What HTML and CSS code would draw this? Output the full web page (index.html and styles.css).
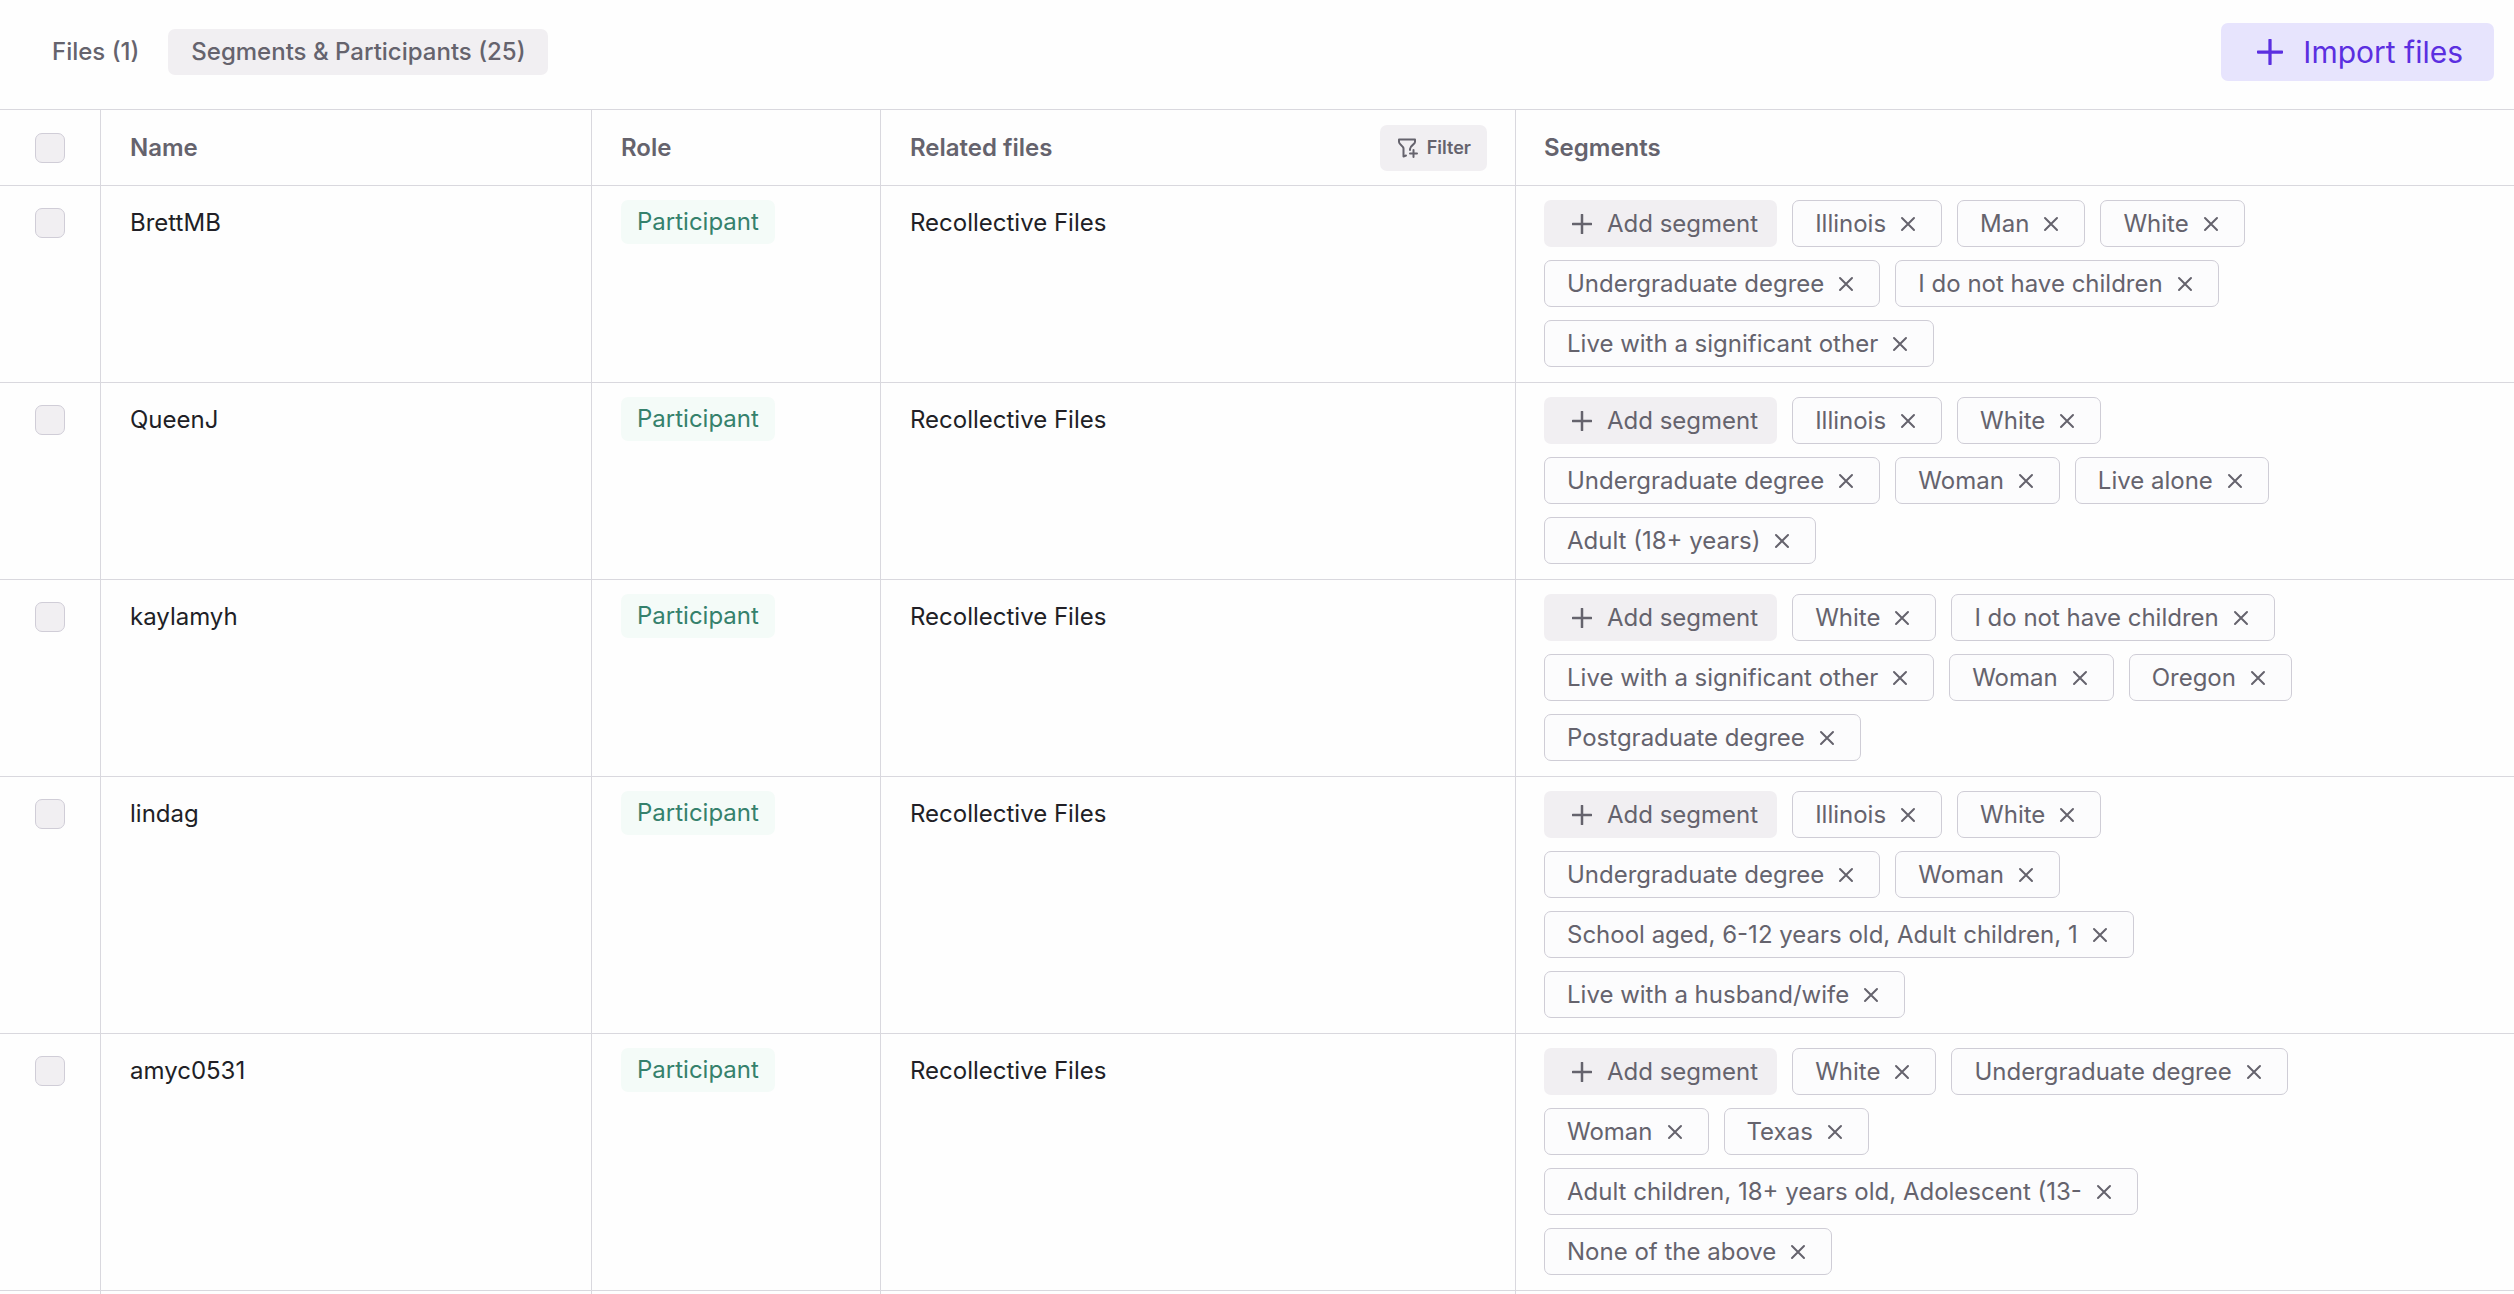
FILE: index.html
```html
<!DOCTYPE html>
<html lang="en">
<head>
    <meta charset="UTF-8">
    <meta name="viewport" content="width=device-width, initial-scale=1.0">
    <title>Segments &amp; Participants</title>
    <link rel="stylesheet" href="styles.css">
</head>
<body>
    <!-- shared icons -->
    <svg class="sprite" aria-hidden="true">
        <symbol id="plus" viewBox="0 0 24 24"><path d="M12 1v22M1 12h22"/></symbol>
        <symbol id="close" viewBox="0 0 18 18"><path d="M3 3l12 12M15 3L3 15"/></symbol>
        <symbol id="funnel" viewBox="0 0 20 20"><path d="M8 17.500L5.500 18.500V10.500C5.500 8 1 6.500 1 4V1.500h16V4c0 2.500-5 3.500-5 7v1M15.500 12v7M12 15.500h7"/></symbol>
    </svg>

    <header class="toolbar">
        <nav class="tabs">
            <button class="tab">Files (1)</button>
            <button class="tab active">Segments &amp; Participants (25)</button>
        </nav>
        <button class="import-btn"><svg class="icon-lg"><use href="#plus"/></svg>Import files</button>
    </header>

    <table class="people">
        <colgroup>
            <col class="col-check">
            <col class="col-name">
            <col class="col-role">
            <col class="col-files">
            <col>
        </colgroup>
        <thead>
            <tr>
                <th><input type="checkbox" aria-label="Select all"></th>
                <th>Name</th>
                <th>Role</th>
                <th>
                    <div class="th-row">Related files
                        <button class="filter-btn"><svg class="icon-filter"><use href="#funnel"/></svg>Filter</button>
                    </div>
                </th>
                <th>Segments</th>
            </tr>
        </thead>
        <tbody id="rows"></tbody>
        <tfoot>
            <tr><td></td><td></td><td></td><td></td><td></td></tr>
        </tfoot>
    </table>
    <script src="script.js"></script>
</body>
</html>
```

FILE: styles.css
```css
* {
    box-sizing: border-box;
}
body {
    margin: 0;
    font-family: Inter, "Open Sans", sans-serif;
    font-size: 24px;
    line-height: 30px;
    color: #211f26;
    background: #fefefe;
    overflow: hidden;
}
button {
    font: inherit;
    color: #65636d;
    border: none;
    border-radius: 7px;
    background: none;
    cursor: pointer;
}
svg {
    fill: none;
    stroke: currentColor;
    stroke-linecap: round;
    stroke-linejoin: round;
    flex: none;
}
.sprite {
    display: none;
}

/* top bar */
.toolbar {
    display: flex;
    justify-content: space-between;
    align-items: center;
    padding: 23px 20px 28px 29px;
}
.tabs {
    display: flex;
    gap: 6px;
}
.tab {
    height: 46px;
    padding: 0 23px;
    font-weight: 500;
}
.tab.active {
    background: #f1eff2;
}
.import-btn {
    display: flex;
    align-items: center;
    gap: 20px;
    height: 58px;
    padding: 0 31px 0 36px;
    font-size: 30px;
    color: #5b2fe0;
    background: #e7e4fd;
}
.icon-lg {
    width: 26px;
    height: 26px;
    stroke-width: 3;
}

/* table */
.people {
    width: 100%;
    table-layout: fixed;
    border-collapse: separate;
    border-spacing: 0;
    border-top: 1px solid #d9d8de;
}
.col-check {
    width: 101px;
}
.col-name {
    width: 491px;
}
.col-role {
    width: 289px;
}
.col-files {
    width: 635px;
}
th, td {
    padding: 14px 28px 15px 29px;
    text-align: left;
    vertical-align: top;
    border-bottom: 1px solid #d9d8de;
    border-right: 1px solid #d9d8de;
}
th:last-child, td:last-child {
    border-right: none;
    padding-left: 28px;
}
th {
    height: 76px;
    padding-top: 0;
    padding-bottom: 0;
    vertical-align: middle;
    font-weight: 600;
    color: #65636d;
}
th:first-child, td:first-child {
    padding-left: 35px;
    padding-right: 0;
}
input[type="checkbox"] {
    appearance: none;
    display: block;
    width: 30px;
    height: 30px;
    margin: 0;
    border: 1px solid #d0cdd7;
    border-radius: 7px;
    background: #f1eff2;
}
td:first-child,
td.text {
    padding-top: 22px;
}
.th-row {
    display: flex;
    justify-content: space-between;
    align-items: center;
}
.filter-btn {
    display: flex;
    align-items: center;
    gap: 9px;
    height: 46px;
    padding: 0 16px 0 18px;
    font-size: 18px;
    background: #f1eff2;
}
.icon-filter {
    width: 20px;
    height: 20px;
    stroke-width: 2;
}
.badge {
    display: inline-block;
    padding: 7px 16px;
    border-radius: 7px;
    color: #35816c;
    background: #f4fbf8;
}

/* segment chips */
.chips {
    display: flex;
    flex-wrap: wrap;
    gap: 13px 15px;
    max-width: 800px;
}
.add-btn, .chip {
    display: flex;
    align-items: center;
    height: 47px;
}
.add-btn {
    gap: 15px;
    padding: 0 19px 0 28px;
    background: #f1eff2;
}
.icon-md {
    width: 20px;
    height: 20px;
    stroke-width: 3;
}
.chip {
    gap: 13px;
    padding: 0 24px 0 22px;
    border: 1px solid #cfcdd6;
    border-radius: 7px;
    color: #65636d;
    background: #fcfcfd;
}
.remove {
    display: flex;
    padding: 0;
}
.icon-sm {
    width: 18px;
    height: 18px;
    stroke-width: 2;
}
```

FILE: script.js
```js
const people = [
    { name: 'BrettMB', segments: ['Illinois', 'Man', 'White', 'Undergraduate degree', 'I do not have children', 'Live with a significant other'] },
    { name: 'QueenJ', segments: ['Illinois', 'White', 'Undergraduate degree', 'Woman', 'Live alone', 'Adult (18+ years)'] },
    { name: 'kaylamyh', segments: ['White', 'I do not have children', 'Live with a significant other', 'Woman', 'Oregon', 'Postgraduate degree'] },
    { name: 'lindag', segments: ['Illinois', 'White', 'Undergraduate degree', 'Woman', 'School aged, 6-12 years old, Adult children, 1', 'Live with a husband/wife'] },
    { name: 'amyc0531', segments: ['White', 'Undergraduate degree', 'Woman', 'Texas', 'Adult children, 18+ years old, Adolescent (13-', 'None of the above'] }
];

function chip(label) {
    return `<span class="chip">${label}<button class="remove" aria-label="Remove ${label}"><svg class="icon-sm"><use href="#close"/></svg></button></span>`;
}

document.getElementById('rows').innerHTML = people.map(p => `
    <tr>
        <td><input type="checkbox" aria-label="Select ${p.name}"></td>
        <td class="text">${p.name}</td>
        <td><span class="badge">Participant</span></td>
        <td class="text">Recollective Files</td>
        <td>
            <div class="chips">
                <button class="add-btn"><svg class="icon-md"><use href="#plus"/></svg>Add segment</button>
                ${p.segments.map(chip).join('')}
            </div>
        </td>
    </tr>`).join('');
```
